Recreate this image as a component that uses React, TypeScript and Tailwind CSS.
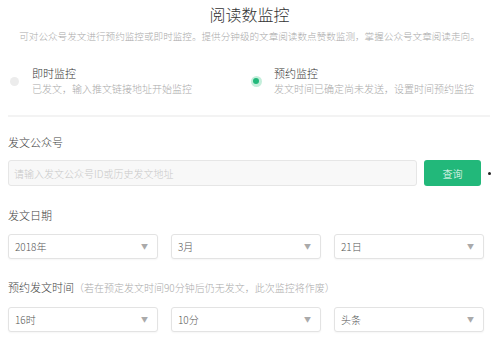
const font = { fontFamily: '"Noto Sans CJK SC", "Noto Sans", sans-serif' };

function Select({ value }: { value: string }) {
  return (
    <div className="flex h-[25px] w-[150px] items-center justify-between rounded-[3px] border border-[#e3e3e3] bg-white pl-[6px] pr-[9px] shadow-[0_1px_2px_rgba(0,0,0,0.04)]">
      <span className="text-[10px] font-light text-[#555]">{value}</span>
      <span className="text-[7px] text-[#aaa]">▼</span>
    </div>
  );
}

function Radio({
  active,
  title,
  desc,
}: {
  active: boolean;
  title: string;
  desc: string;
}) {
  return (
    <div className="flex items-center">
      <div className="flex w-[20px] justify-center">
        {active ? (
          <div className="flex h-[11px] w-[11px] items-center justify-center rounded-full bg-[#c4eedb]">
            <div className="h-[6px] w-[6px] rounded-full bg-[#23b87b]" />
          </div>
        ) : (
          <div className="h-[9px] w-[9px] rounded-full bg-[#ececec]" />
        )}
      </div>
      <div className="ml-[8px] flex flex-col">
        <span className="text-[11px] font-light leading-[15px] text-[#333]">{title}</span>
        <span className="text-[10px] font-light leading-[15px] text-[#aaa]">{desc}</span>
      </div>
    </div>
  );
}

export default function App() {
  return (
    <div className="h-[348px] w-[499px] overflow-hidden bg-white" style={font}>
      <div className="pt-[3px] text-center text-[16px] font-light leading-[22px] text-[#333]">
        阅读数监控
      </div>
      <div className="mt-[3px] text-center text-[9.6px] font-light leading-[16px] text-[#aaa]">
        可对公众号发文进行预约监控或即时监控。提供分钟级的文章阅读数点赞数监测，掌握公众号文章阅读走向。
      </div>

      <div className="mt-[22px] flex">
        <div className="w-[246px] pl-[4px]">
          <Radio active={false} title="即时监控" desc="已发文，输入推文链接地址开始监控" />
        </div>
        <div>
          <Radio active title="预约监控" desc="发文时间已确定尚未发送，设置时间预约监控" />
        </div>
      </div>

      <div className="mx-[8px] mt-[19px] h-[2px] w-[482px] bg-[#f3f3f3]" />

      <div className="px-[8px]">
        <div className="mt-[17px] text-[11px] font-light leading-[16px] text-[#444]">发文公众号</div>
        <div className="mt-[10px] flex items-center">
          <div className="flex h-[26px] w-[417px] items-center rounded-[3px] border border-[#e6e6e6] bg-[#f8f8f8] pl-[5px] text-[10px] font-light text-[#c8c8c8]">
            请输入发文公众号ID或历史发文地址
          </div>
          <button className="ml-[7px] h-[26px] w-[58px] rounded-[3px] bg-[#22b87a] text-[10px] font-light text-white">
            查询
          </button>
          <div className="ml-[7px] h-[3px] w-[3px] rounded-full bg-[#222]" />
        </div>

        <div className="mt-[21px] text-[11px] font-light leading-[16px] text-[#444]">发文日期</div>
        <div className="mt-[11px] flex gap-[13px]">
          <Select value="2018年" />
          <Select value="3月" />
          <Select value="21日" />
        </div>

        <div className="mt-[20px] text-[11px] font-light leading-[16px] text-[#444]">
          预约发文时间
          <span className="text-[10px] text-[#aaa]">（若在预定发文时间90分钟后仍无发文，此次监控将作废）</span>
        </div>
        <div className="mt-[11px] flex gap-[13px]">
          <Select value="16时" />
          <Select value="10分" />
          <Select value="头条" />
        </div>
      </div>
    </div>
  );
}
